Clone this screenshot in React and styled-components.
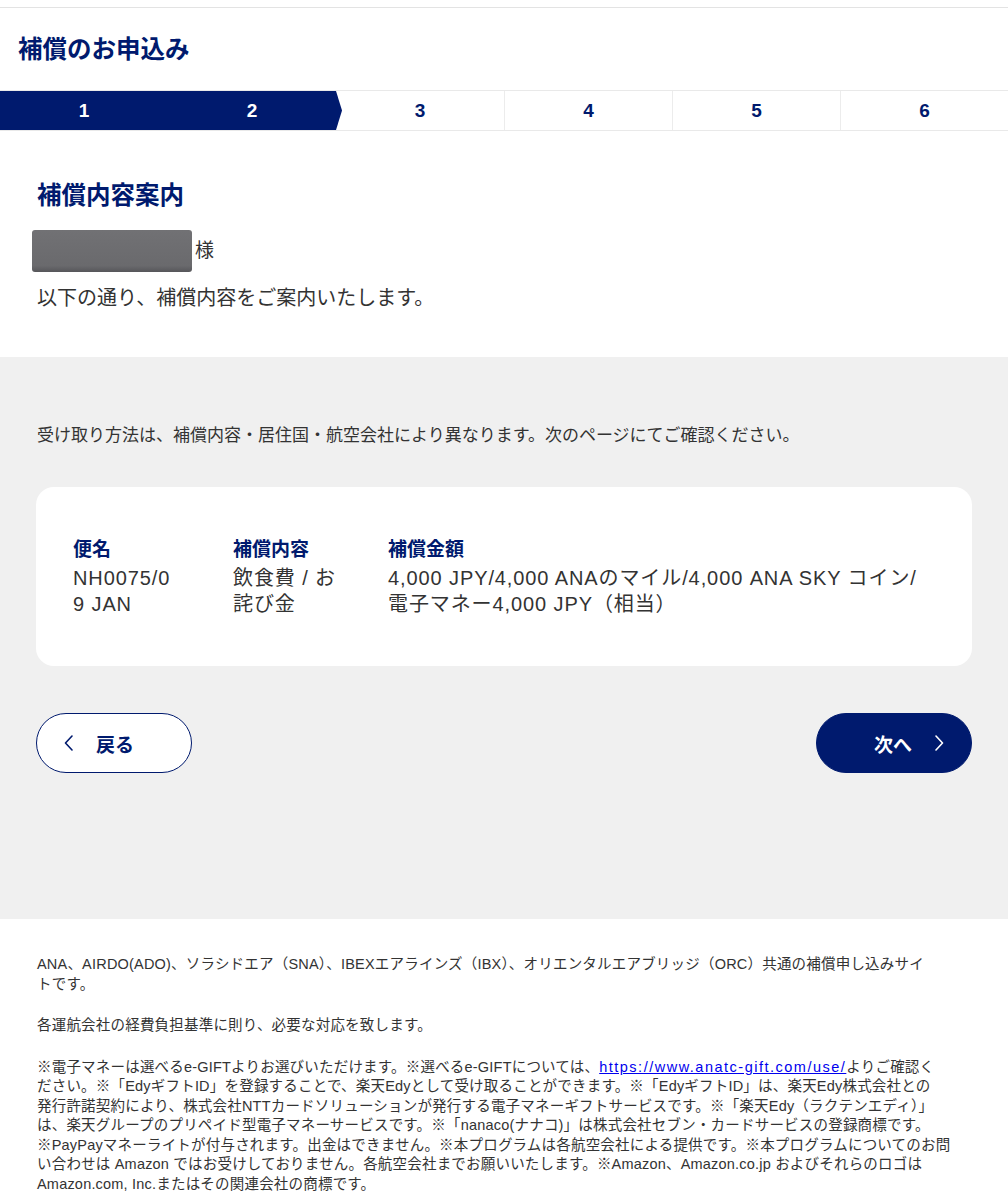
import React from "react";
import styled, { createGlobalStyle } from "styled-components";

const NAVY = "#001a6e";

const GlobalStyle = createGlobalStyle`
  html, body { margin: 0; padding: 0; background: #ffffff; }
  body {
    font-family: "Liberation Sans", "Noto Sans CJK JP", sans-serif;
    color: #333333;
    -webkit-font-smoothing: antialiased;
  }
  * { box-sizing: border-box; }
`;

const Page = styled.div`
  width: 1008px;
  padding-top: 7px;
  background: #ffffff;
`;

const Header = styled.header`
  height: 83px;
  border-top: 1px solid #e3e3e3;
  display: flex;
  align-items: center;
  padding: 0 18px 4px;
`;

const PageTitle = styled.h1`
  margin: 0;
  font-size: 24.5px;
  font-weight: 700;
  color: ${NAVY};
`;

const Stepper = styled.ol`
  list-style: none;
  margin: 0;
  padding: 0;
  display: grid;
  grid-template-columns: repeat(6, 1fr);
  height: 41px;
  border-top: 1px solid #e9e9e9;
  border-bottom: 1px solid #e9e9e9;
`;

const Step = styled.li`
  position: relative;
  display: flex;
  align-items: center;
  justify-content: center;
  font-size: 19px;
  font-weight: 700;
  background: ${(p) => (p.$active ? NAVY : "#ffffff")};
  color: ${(p) => (p.$active ? "#ffffff" : NAVY)};
  border-left: ${(p) => (p.$divider ? "1px solid #ececec" : "none")};

  &::after {
    content: "";
    display: ${(p) => (p.$tip ? "block" : "none")};
    position: absolute;
    top: 0;
    right: -6px;
    width: 6px;
    height: 100%;
    background: ${NAVY};
    clip-path: polygon(0 0, 100% 50%, 0 100%);
    z-index: 1;
  }
`;

const Intro = styled.section`
  padding: 48px 37px 46px;
  display: flex;
  flex-direction: column;
  align-items: flex-start;
`;

const SectionTitle = styled.h2`
  margin: 0 0 17px;
  font-size: 24.5px;
  line-height: 34px;
  font-weight: 700;
  color: ${NAVY};
`;

const NameRow = styled.div`
  display: flex;
  align-items: center;
  margin-left: -5px;
  font-size: 19px;
  line-height: 22px;
`;

const Redacted = styled.span`
  display: inline-block;
  width: 160px;
  height: 42px;
  border-radius: 3px;
  background: linear-gradient(#717174 0%, #6a6a6d 85%, #56565a 100%);
  margin-right: 3px;
`;

const Lead = styled.p`
  margin: 13px 0 0;
  font-size: 20px;
  line-height: 26px;
`;

const Grey = styled.section`
  background: #f0f0f0;
  padding: 68px 36px 146px;
`;

const Notice = styled.p`
  margin: 0 0 40px 1px;
  font-size: 17px;
  line-height: 22px;
`;

const Card = styled.div`
  background: #ffffff;
  border-radius: 18px;
  padding: 48px 37px 49px;
  display: grid;
  grid-template-columns: 120px 115px 1fr;
  column-gap: 40px;
`;

const Col = styled.div`
  display: flex;
  flex-direction: column;
`;

const ColHead = styled.div`
  font-size: 19px;
  line-height: 30px;
  font-weight: 700;
  color: ${NAVY};
`;

const ColValue = styled.div`
  font-size: 20px;
  line-height: 26px;
  color: #333333;
  letter-spacing: 0.9px;
`;

const Actions = styled.div`
  margin-top: 47px;
  display: flex;
  justify-content: space-between;
`;

const NavButton = styled.button`
  width: 156px;
  height: 60px;
  border-radius: 30px;
  border: 1.5px solid ${NAVY};
  background: ${(p) => (p.$primary ? NAVY : "#ffffff")};
  color: ${(p) => (p.$primary ? "#ffffff" : NAVY)};
  display: flex;
  align-items: center;
  justify-content: ${(p) => (p.$primary ? "flex-end" : "flex-start")};
  gap: 23px;
  padding: ${(p) => (p.$primary ? "0 27px 0 0" : "0 0 0 27px")};
  font-family: inherit;
  font-size: 19px;
  font-weight: 700;
  cursor: pointer;
`;

const Footer = styled.footer`
  padding: 36px 37px 20px;
  font-size: 14.5px;
  line-height: 19.5px;
  color: #333333;
  letter-spacing: 0.2px;
`;

const FootPara = styled.p`
  margin: 0 0 22px;
`;

const Link = styled.a`
  color: #0000ee;
  text-decoration: underline;
  letter-spacing: 1.5px;
`;

const Chevron = ({ dir }) => (
  <svg width="9" height="16" viewBox="0 0 9 16" fill="none" aria-hidden="true">
    <polyline
      points={dir === "left" ? "8,1 1.5,8 8,15" : "1,1 7.5,8 1,15"}
      stroke="currentColor"
      strokeWidth="1.6"
      strokeLinecap="round"
      strokeLinejoin="round"
    />
  </svg>
);

const steps = [1, 2, 3, 4, 5, 6];
const current = 2;

export default function App() {
  return (
    <>
      <GlobalStyle />
      <Page>
        <Header>
          <PageTitle>補償のお申込み</PageTitle>
        </Header>
        <Stepper>
          {steps.map((n) => (
            <Step
              key={n}
              $active={n <= current}
              $tip={n === current}
              $divider={n > current + 1}
            >
              {n}
            </Step>
          ))}
        </Stepper>

        <Intro>
          <SectionTitle>補償内容案内</SectionTitle>
          <NameRow>
            <Redacted />
            様
          </NameRow>
          <Lead>以下の通り、補償内容をご案内いたします。</Lead>
        </Intro>

        <Grey>
          <Notice>
            受け取り方法は、補償内容・居住国・航空会社により異なります。次のページにてご確認ください。
          </Notice>
          <Card>
            <Col>
              <ColHead>便名</ColHead>
              <ColValue>
                NH0075/0
                <br />9 JAN
              </ColValue>
            </Col>
            <Col>
              <ColHead>補償内容</ColHead>
              <ColValue>
                飲食費 / お<br />
                詫び金
              </ColValue>
            </Col>
            <Col>
              <ColHead>補償金額</ColHead>
              <ColValue>
                4,000 JPY/4,000 ANAのマイル/4,000 ANA SKY コイン/
                <br />
                電子マネー4,000 JPY（相当）
              </ColValue>
            </Col>
          </Card>
          <Actions>
            <NavButton type="button">
              <Chevron dir="left" />
              戻る
            </NavButton>
            <NavButton type="button" $primary>
              次へ
              <Chevron dir="right" />
            </NavButton>
          </Actions>
        </Grey>

        <Footer>
          <FootPara>
            ANA、AIRDO(ADO)、ソラシドエア（SNA）、IBEXエアラインズ（IBX）、オリエンタルエアブリッジ（ORC）共通の補償申し込みサイ
            <br />
            トです。
          </FootPara>
          <FootPara>各運航会社の経費負担基準に則り、必要な対応を致します。</FootPara>
          <FootPara>
            ※電子マネーは選べるe-GIFTよりお選びいただけます。※選べるe-GIFTについては、
            <Link href="#">https://www.anatc-gift.com/use/</Link>
            よりご確認く
            <br />
            ださい。※「EdyギフトID」を登録することで、楽天Edyとして受け取ることができます。※「EdyギフトID」は、楽天Edy株式会社との
            <br />
            発行許諾契約により、株式会社NTTカードソリューションが発行する電子マネーギフトサービスです。※「楽天Edy（ラクテンエディ）」
            <br />
            は、楽天グループのプリペイド型電子マネーサービスです。※「nanaco(ナナコ)」は株式会社セブン・カードサービスの登録商標です。
            <br />
            ※PayPayマネーライトが付与されます。出金はできません。※本プログラムは各航空会社による提供です。※本プログラムについてのお問
            <br />
            い合わせは Amazon ではお受けしておりません。各航空会社までお願いいたします。※Amazon、Amazon.co.jp およびそれらのロゴは
            <br />
            Amazon.com, Inc.またはその関連会社の商標です。
          </FootPara>
        </Footer>
      </Page>
    </>
  );
}
